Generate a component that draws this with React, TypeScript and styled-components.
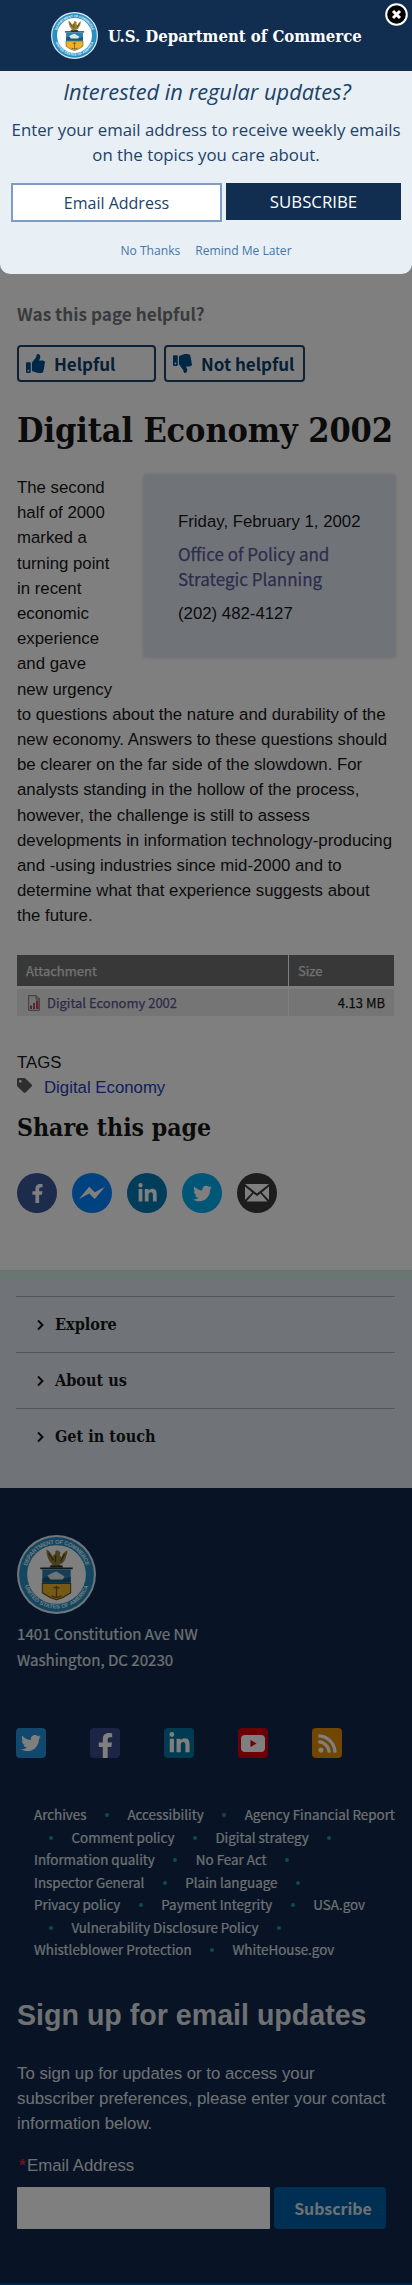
import React from "react";
import styled, { createGlobalStyle } from "styled-components";
import { FaFacebookF, FaLinkedinIn, FaRss, FaTag, FaThumbsDown, FaThumbsUp, FaTwitter } from "react-icons/fa";

const sans = `"Liberation Sans", Arial, sans-serif`;
const source = `"Noto Sans CJK SC", "Noto Sans", sans-serif`;
const serif = `"DejaVu Serif Condensed", "DejaVu Serif", serif`;
const open = `"Open Sans", sans-serif`;

const GlobalStyle = createGlobalStyle`
  *, *::before, *::after { box-sizing: border-box; }
  body { margin: 0; background: #fff; }
  h1, h2, p, ul { margin: 0; padding: 0; }
  ul { list-style: none; }
  a { color: inherit; text-decoration: none; }
  svg { display: block; flex: none; }
`;

const Page = styled.div`
  position: relative;
  width: 412px;
  height: 2285px;
  overflow: hidden;
  background: #fff;
  color: #171717;
  font: 16.8px/25.2px ${sans};
`;

const Shade = styled.div`
  position: absolute;
  inset: 0;
  background: rgba(0, 0, 0, 0.5);
`;

/* ---------- main column ---------- */

const Main = styled.main`
  height: 1270px;
  padding: 302px 17px 0;
`;

const Question = styled.p`
  font: 700 17.2px/24px ${source};
  color: #71767a;
`;

const Votes = styled.div`
  display: flex;
  gap: 8px;
  margin-top: 19px;
`;

const Vote = styled.button<{ $width: number }>`
  display: flex;
  align-items: center;
  gap: 9px;
  width: ${(p) => p.$width}px;
  height: 37px;
  padding: 0 0 0 7px;
  border: 2px solid #1c4469;
  border-radius: 4px;
  background: transparent;
  color: #00508c;
  font: 700 17px/24px ${source};
  white-space: nowrap;
  span { color: #0b3f6c; }
`;

const Title = styled.h1`
  margin: 27px 0 24px;
  font: 700 34px/42px ${serif};
  font-stretch: condensed;
  letter-spacing: -0.12px;
  white-space: nowrap;
`;

const Article = styled.div`
  height: 454px;
`;

const Contact = styled.aside`
  float: right;
  width: 251px;
  height: 182px;
  margin: 0 0 30px 24px;
  padding: 34px 0 0 34px;
  background: #e1e9f3;
  box-shadow: 0 0 4px rgba(0, 0, 0, 0.2);
`;

const Office = styled.a`
  display: block;
  margin: 7px 0 10px;
  color: #5b5a96;
  font: 400 17px/25px ${source};
  -webkit-text-stroke: 0.25px currentColor;
`;

const Files = styled.div`
  display: grid;
  grid-template-columns: 271px 105px;
  gap: 3px 1px;
  margin-top: 26px;
  font: 400 13px/27px ${source};
  -webkit-text-stroke: 0.25px currentColor;
`;

const HeadCell = styled.div`
  height: 31px;
  padding: 0 9px;
  background: #707070;
  color: #e4e4e4;
  line-height: 31px;
`;

const Cell = styled.div<{ $end?: boolean }>`
  display: flex;
  align-items: center;
  justify-content: ${(p) => (p.$end ? "flex-end" : "flex-start")};
  gap: 7px;
  height: 27px;
  padding: 0 9px 0 11px;
  background: #ebebeb;
  a { color: #5b5590; }
`;

const Tags = styled.div`
  margin-top: 34px;
`;

const TagRow = styled.div`
  display: flex;
  align-items: center;
  gap: 12px;
  color: #5c5c5c;
  a { color: #1f3cba; }
  svg { margin-top: -4px; }
`;

const ShareTitle = styled.h2`
  margin: 13px 0 30px;
  font: 700 24.6px/30px ${serif};
  font-stretch: condensed;
`;

const ShareList = styled.div`
  display: flex;
  gap: 15px;
`;

const ShareLink = styled.a<{ $color: string }>`
  display: grid;
  place-items: center;
  width: 40px;
  height: 40px;
  border-radius: 50%;
  background: ${(p) => p.$color};
  color: #fff;
`;

/* ---------- accordion ---------- */

const Accordion = styled.nav`
  height: 218px;
  padding: 16px 17px 0 16px;
  border-top: 10px solid #d5ece3;
  background: #e1e9f3;
`;

const AccordionItem = styled.a`
  display: flex;
  align-items: center;
  gap: 11px;
  height: 56px;
  padding-left: 21px;
  border-top: 1px solid #a6adbb;
  font: 700 16.1px/24px ${serif};
  font-stretch: condensed;
`;

/* ---------- footer ---------- */

const Footer = styled.footer`
  height: 797px;
  padding: 47px 17px 0;
  border-bottom: 2px solid #004a94;
  background: #10264c;
  color: #dfe1e2;
`;

const Address = styled.address`
  margin: 6px 0 56px;
  font: normal 400 15.1px/26px ${source};
  -webkit-text-stroke: 0.2px currentColor;
`;

const SocialRow = styled.div`
  display: flex;
  gap: 44px;
  margin-left: -1px;
`;

const SocialTile = styled.a<{ $color: string; $low?: boolean }>`
  display: grid;
  place-items: ${(p) => (p.$low ? "end center" : "center")};
  width: 30px;
  height: 30px;
  border-radius: 4px;
  background: ${(p) => p.$color};
  color: #fff;
`;

const PolicyLinks = styled.ul`
  margin: 45px -10px 37px 17px;
  font: 400 13.4px/22.5px ${source};
  -webkit-text-stroke: 0.2px currentColor;
`;

const PolicyRow = styled.li`
  display: flex;
  white-space: nowrap;
`;

const Dot = styled.i<{ $lead?: boolean }>`
  width: 4px;
  height: 4px;
  margin: 10px 18.5px 0 ${(p) => (p.$lead ? 15 : 18.5)}px;
  border-radius: 50%;
  background: #1a9a8c;
`;

const SignupTitle = styled.h2`
  margin-bottom: 29px;
  font: 700 28.6px/34px ${sans};
  white-space: nowrap;
`;

const Label = styled.label`
  display: block;
  margin: 17px 0 9px 2px;
  i { display: inline-block; width: 8px; color: #d5263b; font-style: normal; font-weight: 700; }
`;

const SignupRow = styled.div`
  display: flex;
  gap: 4px;
`;

const SignupInput = styled.input`
  width: 253px;
  height: 42px;
  border: 0;
  border-radius: 1px;
  background: #fff;
`;

const SignupButton = styled.button`
  width: 112px;
  height: 42px;
  padding: 2px 0 0 6px;
  border: 0;
  border-radius: 4px;
  background: #005ea8;
  color: #dfe1e2;
  font: 700 15.9px/24px ${source};
`;

/* ---------- subscription dialog ---------- */

const Dialog = styled.section`
  position: absolute;
  top: 0;
  left: 0;
  width: 412px;
  height: 274px;
  overflow: hidden;
  border-radius: 0 0 10px 10px;
  background: #e8eff5;
  color: #1c4268;
  text-align: center;
  font-family: ${open};
`;

const Banner = styled.header`
  display: flex;
  align-items: center;
  gap: 10px;
  height: 71px;
  padding-left: 51px;
  background: #112e51;
  color: #fff;
`;

const BannerName = styled.span`
  font: 700 16.6px/24px ${serif};
  font-stretch: condensed;
  white-space: nowrap;
`;

const CloseButton = styled.button`
  position: absolute;
  top: 3px;
  right: 4px;
  width: 23px;
  height: 23px;
  padding: 0;
  border: 0;
  background: none;
`;

const DialogTitle = styled.p`
  margin-top: 6px;
  padding-left: 2px;
  font: italic 400 21.8px/30px ${open};
`;

const DialogText = styled.p`
  margin: 10px 0 16px;
  font: 400 16.8px/25px ${open};
  white-space: nowrap;
`;

const DialogForm = styled.div`
  display: flex;
  gap: 4px;
  padding: 0 11px;
`;

const DialogInput = styled.input`
  width: 211px;
  height: 39px;
  border: 2px solid #7e9cc4;
  background: #fff;
  text-align: center;
  font: 400 16px/24px ${open};
  &::placeholder { color: #1c4268; opacity: 1; }
`;

const DialogSubmit = styled.button`
  width: 175px;
  height: 37px;
  padding: 1px 0 0;
  border: 0;
  background: #112e51;
  color: #fff;
  font: 400 16.8px/24px ${open};
`;

const DialogLinks = styled.div`
  display: flex;
  justify-content: center;
  gap: 15px;
  margin-top: 20px;
  color: #4577ab;
  font: 400 12.1px/18px ${open};
`;

function Seal({ size }: { size: number }) {
  return (
    <svg width={size} height={size} viewBox="0 0 78 78">
      <defs>
        <path id="ring-top" d="M9.3 45A30.3 30.3 0 1 1 68.7 45" />
        <path id="ring-bottom" d="M6 43A33.2 33.2 0 0 0 72 43" />
      </defs>
      <circle cx="39" cy="39" r="39" fill="#dcecf4" />
      <circle cx="39" cy="39" r="37" fill="#278fc2" />
      <circle cx="39" cy="39" r="29" fill="#fff" />
      <g fill="#e6f6ff" fontFamily="Liberation Sans" fontWeight="700" fontSize="5.6">
        <text textAnchor="middle"><textPath href="#ring-top" startOffset="50%" textLength="78">DEPARTMENT OF COMMERCE</textPath></text>
        <text textAnchor="middle"><textPath href="#ring-bottom" startOffset="50%" textLength="82">UNITED STATES OF AMERICA</textPath></text>
      </g>
      <path d="M29 14q4 2 6 7l3-3q-1-3 2-3l3 2-1 3 2 2q1-5 6-7-1 8-5 13l-3 1 4 3h-15l4-3q-6-5-6-15Z" fill="#99823a" />
      <path d="M31 18l5 7M47 19l-4 7M38 20v7" stroke="#4b4219" strokeWidth="1.2" fill="none" />
      <path d="M23 33h32M33 31h12" stroke="#25333d" strokeWidth="1.8" />
      <path d="M25 34h28v15H25Z" fill="#2b7fae" />
      <path d="M25 48h28v9q-7 5-14 7-7-2-14-7Z" fill="#eab32b" stroke="#5f4b16" strokeWidth="1" />
      <path d="M25 43q7-4 14-1t14-1v6H25Z" fill="#165b80" />
      <path d="M30 40l6-3 3-1 8 5-2 3H33Z" fill="#d9e8ee" />
      <path d="M39 50v11m-3-9h6M34 60q5 3 10 0" stroke="#7a5614" strokeWidth="1.3" fill="none" />
    </svg>
  );
}

const MessengerBolt = () => (
  <svg width="26" height="14" viewBox="0 0 26 14">
    <path d="M0 13 10.2.8 15.8 6.2 26 .8 15.8 13 10.2 7.6Z" fill="currentColor" />
  </svg>
);

const Envelope = () => (
  <svg width="24" height="18" viewBox="0 0 24 18" fill="currentColor">
    <path d="M0 0h24L12 9.5Z" />
    <path d="M0 2.6 7.2 8.4 0 16ZM24 2.6 16.8 8.4 24 16ZM1.5 17.5l7-8L12 12l3.5-2.5 7 8Z" />
  </svg>
);

const Chevron = () => (
  <svg width="7" height="12" viewBox="0 0 7 12" fill="none" stroke="currentColor" strokeWidth="2">
    <path d="m1 1.5 4.5 4.5L1 10.500" />
  </svg>
);

const ReportIcon = () => (
  <svg width="12" height="16" viewBox="0 0 12 16">
    <path d="M.7.7h7.5l3.1 3.1v11.5H.7Z" fill="#e6e6e6" stroke="#6e7278" />
    <path d="M8 .7V4h3.3" fill="none" stroke="#6e7278" />
    <path d="M2 10.5h2V14H2ZM5 8h2v6H5ZM8 5.5h2.5V14H8Z" fill="#c2435c" />
  </svg>
);

const YouTubeMark = () => (
  <svg width="24" height="17" viewBox="0 0 24 17">
    <rect width="24" height="17" rx="4" fill="currentColor" />
    <path d="m9.5 5 6 3.5-6 3.5Z" fill="#d8000c" />
  </svg>
);

const policyRows: string[][] = [
  ["Archives", "•", "Accessibility", "•", "Agency Financial Report"],
  ["•", "Comment policy", "•", "Digital strategy", "•"],
  ["Information quality", "•", "No Fear Act", "•"],
  ["Inspector General", "•", "Plain language", "•"],
  ["Privacy policy", "•", "Payment Integrity", "•", "USA.gov"],
  ["•", "Vulnerability Disclosure Policy", "•"],
  ["Whistleblower Protection", "•", "WhiteHouse.gov"],
];

export default function App() {
  return (
    <Page>
      <GlobalStyle />
      <Main>
        <Question>Was this page helpful?</Question>
        <Votes>
          <Vote $width={139}><FaThumbsUp size={19} /><span>Helpful</span></Vote>
          <Vote $width={141}><FaThumbsDown size={19} /><span>Not helpful</span></Vote>
        </Votes>
        <Title>Digital Economy 2002</Title>
        <Article>
          <Contact>
            <p>Friday, February 1, 2002</p>
            <Office href="#">Office of Policy and<br />Strategic Planning</Office>
            <p>(202) 482-4127</p>
          </Contact>
          <p>
            The second half of 2000 marked a turning point in recent economic experience and gave
            new urgency to questions about the nature and durability of the new economy. Answers to
            these questions should be clearer on the far side of the slowdown. For analysts standing
            in the hollow of the process, however, the challenge is still to assess developments in
            information technology-producing and -using industries since mid-2000 and to determine
            what that experience suggests about the future.
          </p>
        </Article>
        <Files>
          <HeadCell>Attachment</HeadCell>
          <HeadCell>Size</HeadCell>
          <Cell><ReportIcon /><a href="#">Digital Economy 2002</a></Cell>
          <Cell $end>4.13 MB</Cell>
        </Files>
        <Tags>
          <p>TAGS</p>
          <TagRow><FaTag size={15} /><a href="#">Digital Economy</a></TagRow>
        </Tags>
        <ShareTitle>Share this page</ShareTitle>
        <ShareList>
          <ShareLink $color="#3b5998"><FaFacebookF size={19} /></ShareLink>
          <ShareLink $color="#0084ff"><MessengerBolt /></ShareLink>
          <ShareLink $color="#007bb5"><FaLinkedinIn size={21} /></ShareLink>
          <ShareLink $color="#00aced"><FaTwitter size={19} /></ShareLink>
          <ShareLink $color="#3a3a3a"><Envelope /></ShareLink>
        </ShareList>
      </Main>
      <Accordion>
        {["Explore", "About us", "Get in touch"].map((name) => (
          <AccordionItem key={name} href="#"><Chevron />{name}</AccordionItem>
        ))}
      </Accordion>
      <Footer>
        <Seal size={79} />
        <Address>1401 Constitution Ave NW<br />Washington, DC 20230</Address>
        <SocialRow>
          <SocialTile $color="#2190dc"><FaTwitter size={20} /></SocialTile>
          <SocialTile $color="#3b4a8c" $low><FaFacebookF size={25} /></SocialTile>
          <SocialTile $color="#0077a5"><FaLinkedinIn size={23} /></SocialTile>
          <SocialTile $color="#d8000c"><YouTubeMark /></SocialTile>
          <SocialTile $color="#e08c00"><FaRss size={21} /></SocialTile>
        </SocialRow>
        <PolicyLinks>
          {policyRows.map((row, r) => (
            <PolicyRow key={r}>
              {row.map((item, i) =>
                item === "•" ? <Dot key={i} $lead={i === 0} /> : <a key={i} href="#">{item}</a>
              )}
            </PolicyRow>
          ))}
        </PolicyLinks>
        <SignupTitle>Sign up for email updates</SignupTitle>
        <p>To sign up for updates or to access your subscriber preferences, please enter your contact information below.</p>
        <Label htmlFor="signup"><i>*</i>Email Address</Label>
        <SignupRow>
          <SignupInput id="signup" />
          <SignupButton>Subscribe</SignupButton>
        </SignupRow>
      </Footer>
      <Shade />
      <Dialog>
        <Banner>
          <Seal size={47} />
          <BannerName>U.S. Department of Commerce</BannerName>
        </Banner>
        <CloseButton aria-label="Close">
          <svg width="23" height="23" viewBox="0 0 23 23">
            <circle cx="11.5" cy="11.5" r="10.3" fill="#000" stroke="#fff" strokeWidth="2" />
            <path d="m8 8 7 7m0-7-7 7" stroke="#fff" strokeWidth="3" />
          </svg>
        </CloseButton>
        <DialogTitle>Interested in regular updates?</DialogTitle>
        <DialogText>Enter your email address to receive weekly emails<br />on the topics you care about.</DialogText>
        <DialogForm>
          <DialogInput placeholder="Email Address" />
          <DialogSubmit>SUBSCRIBE</DialogSubmit>
        </DialogForm>
        <DialogLinks><a href="#">No Thanks</a><a href="#">Remind Me Later</a></DialogLinks>
      </Dialog>
    </Page>
  );
}
